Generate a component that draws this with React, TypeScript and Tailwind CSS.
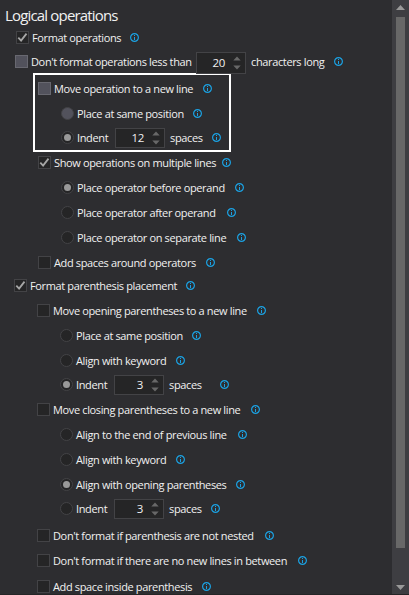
import clsx from "clsx";
import React from "react";

type Option = {
  kind: "check" | "radio";
  label: string;
  // row placement: left indent and gap to the row above
  row: string;
  // width of the label, so that the info icon follows it
  width: string;
  on?: boolean;
  hot?: boolean;
  value?: number;
  suffix?: string;
  suffixWidth?: string;
};

const intro: Option[] = [
  { kind: "check", label: "Format operations", row: "pl-4", width: "w-[88px]", on: true },
  {
    kind: "check",
    label: "Don't format operations less than",
    row: "pl-[15px] mt-1",
    width: "w-[161px]",
    hot: true,
    value: 20,
    suffix: "characters long",
    suffixWidth: "w-[73px]",
  },
];

const framed: Option[] = [
  { kind: "check", label: "Move operation to a new line", row: "pl-[3px] mt-[3px]", width: "w-[139px]", hot: true },
  { kind: "radio", label: "Place at same position", row: "pl-[26px] mt-[5px]", width: "w-[106px]", hot: true },
  {
    kind: "radio",
    label: "Indent",
    row: "pl-[26px] mt-1",
    width: "w-[33px]",
    on: true,
    value: 12,
    suffix: "spaces",
    suffixWidth: "w-[32px]",
  },
];

const rest: Option[] = [
  { kind: "check", label: "Show operations on multiple lines", row: "pl-[38px]", width: "w-[158px]", on: true },
  { kind: "radio", label: "Place operator before operand", row: "pl-[61px] mt-[5px]", width: "w-[148px]", on: true },
  { kind: "radio", label: "Place operator after operand", row: "pl-[61px] mt-[5px]", width: "w-[140px]" },
  { kind: "radio", label: "Place operator on separate line", row: "pl-[61px] mt-[5px]", width: "w-[150px]" },
  { kind: "check", label: "Add spaces around operators", row: "pl-[38px] mt-[5px]", width: "w-[142px]" },
  { kind: "check", label: "Format parenthesis placement", row: "pl-[14px] mt-[3px]", width: "w-[146px]", on: true },
  { kind: "check", label: "Move opening parentheses to a new line", row: "pl-[37px] mt-[5px]", width: "w-[194px]" },
  { kind: "radio", label: "Place at same position", row: "pl-[60px] mt-[5px]", width: "w-[106px]" },
  { kind: "radio", label: "Align with keyword", row: "pl-[60px] mt-[5px]", width: "w-[90px]" },
  {
    kind: "radio",
    label: "Indent",
    row: "pl-[60px] mt-1",
    width: "w-[33px]",
    on: true,
    value: 3,
    suffix: "spaces",
    suffixWidth: "w-[41px]",
  },
  { kind: "check", label: "Move closing parentheses to a new line", row: "pl-[37px] mt-[5px]", width: "w-[188px]" },
  { kind: "radio", label: "Align to the end of previous line", row: "pl-[60px] mt-[5px]", width: "w-[152px]" },
  { kind: "radio", label: "Align with keyword", row: "pl-[60px] mt-[5px]", width: "w-[90px]" },
  { kind: "radio", label: "Align with opening parentheses", row: "pl-[60px] mt-[5px]", width: "w-[150px]", on: true },
  {
    kind: "radio",
    label: "Indent",
    row: "pl-[60px] mt-1",
    width: "w-[33px]",
    value: 3,
    suffix: "spaces",
    suffixWidth: "w-[32px]",
  },
  { kind: "check", label: "Don't format if parenthesis are not nested", row: "pl-[37px] mt-[7px]", width: "w-[202px]" },
  { kind: "check", label: "Don't format if there are no new lines in between", row: "pl-[37px] mt-[5px]", width: "w-[235px]" },
  { kind: "check", label: "Add space inside parenthesis", row: "pl-[37px] mt-[6px]", width: "w-[139px]" },
];

function InfoIcon() {
  return (
    <svg width="9" height="9" viewBox="0 0 9 9" fill="none" className="ml-2.5 mt-px shrink-0" aria-hidden="true">
      <circle cx="4.5" cy="4.5" r="3.9" stroke="#1ba1e2" strokeWidth="1.2" />
      <path d="M4.5 2v1M4.5 4v3" stroke="#1ba1e2" strokeWidth="1" />
    </svg>
  );
}

function Mark({ kind, on, hot }: Pick<Option, "kind" | "on" | "hot">) {
  return (
    <span
      className={clsx(
        "mt-px flex size-[13px] shrink-0 items-center justify-center border",
        kind === "radio" && "rounded-full",
        hot ? "bg-[#52525c]" : "bg-[#252526]",
        hot && kind === "check" ? "border-[#686870]" : "border-[#434346]",
      )}
    >
      {on && kind === "radio" && <span className="size-[7px] rounded-full bg-[#999999]" />}
      {on && kind === "check" && (
        <svg width="11" height="11" viewBox="0 0 11 11" fill="none" aria-hidden="true">
          <path d="M1.3 5.6 4.1 8.6 9.5 1.6" stroke="#a6a6a6" strokeWidth="1.8" />
        </svg>
      )}
    </span>
  );
}

function Spinner({ value, tall }: { value: number; tall?: boolean }) {
  return (
    <span
      className={clsx(
        "flex w-[50px] shrink-0 items-center justify-end border border-[#434346] bg-[#252526] pr-1",
        tall ? "mt-1 h-[22px]" : "mt-0.5 h-5",
      )}
    >
      <span className="mr-2 text-[11.5px]">{value}</span>
      <svg width="8" height="14" viewBox="0 0 8 14" fill="#686868" aria-hidden="true">
        <path d="M0.3 4.5 4 0.5 7.7 4.5ZM0.3 9.5 4 13.5 7.7 9.5Z" />
      </svg>
    </span>
  );
}

function OptionRow({ option }: { option: Option }) {
  const { kind, label, row, width, on, hot, value, suffix, suffixWidth } = option;
  return (
    <div className={clsx("flex h-5 items-center whitespace-nowrap", row)}>
      <Mark kind={kind} on={on} hot={hot} />
      <span className={clsx("ml-[3px] shrink-0 pt-0.5", width)}>{label}</span>
      {value !== undefined && (
        <>
          <span className={kind === "check" ? "w-1" : "w-[5px]"} />
          <Spinner value={value} tall={kind === "check"} />
          <span className={clsx("ml-[5px] shrink-0 pt-0.5", suffixWidth)}>{suffix}</span>
        </>
      )}
      <InfoIcon />
    </div>
  );
}

function ScrollBar() {
  return (
    <div className="flex w-[17px] shrink-0 flex-col items-center bg-[#3e3e42]">
      <svg width="17" height="17" viewBox="0 0 17 17" fill="#999999" className="shrink-0" aria-hidden="true">
        <path d="M4 10 8.5 5 13 10Z" />
      </svg>
      <div className="h-[531px] w-[9px] shrink-0 bg-[#686868]" />
      <svg width="17" height="17" viewBox="0 0 17 17" fill="#999999" className="mt-[30px] shrink-0" aria-hidden="true">
        <path d="M4 7 8.5 12 13 7Z" />
      </svg>
    </div>
  );
}

export default function App() {
  return (
    <div className="flex h-[595px] w-[409px] overflow-hidden border-b border-[#252526] bg-[#2d2d30] font-['Open_Sans','Noto_Sans',sans-serif] text-[11px] leading-5 tracking-[-0.36px] text-[#f1f1f1]">
      <div className="min-w-0 flex-1">
        <h1 className="h-[27px] pl-[5px] pt-1 text-[15px] leading-[22px] tracking-[-0.83px]">Logical operations</h1>
        {intro.map((option) => (
          <OptionRow key={option.label} option={option} />
        ))}
        <div className="ml-[33px] mt-0.5 h-[79px] w-[198px] border-2 border-white">
          {framed.map((option) => (
            <OptionRow key={option.label} option={option} />
          ))}
        </div>
        {rest.map((option, i) => (
          <OptionRow key={i} option={option} />
        ))}
      </div>
      <ScrollBar />
    </div>
  );
}
